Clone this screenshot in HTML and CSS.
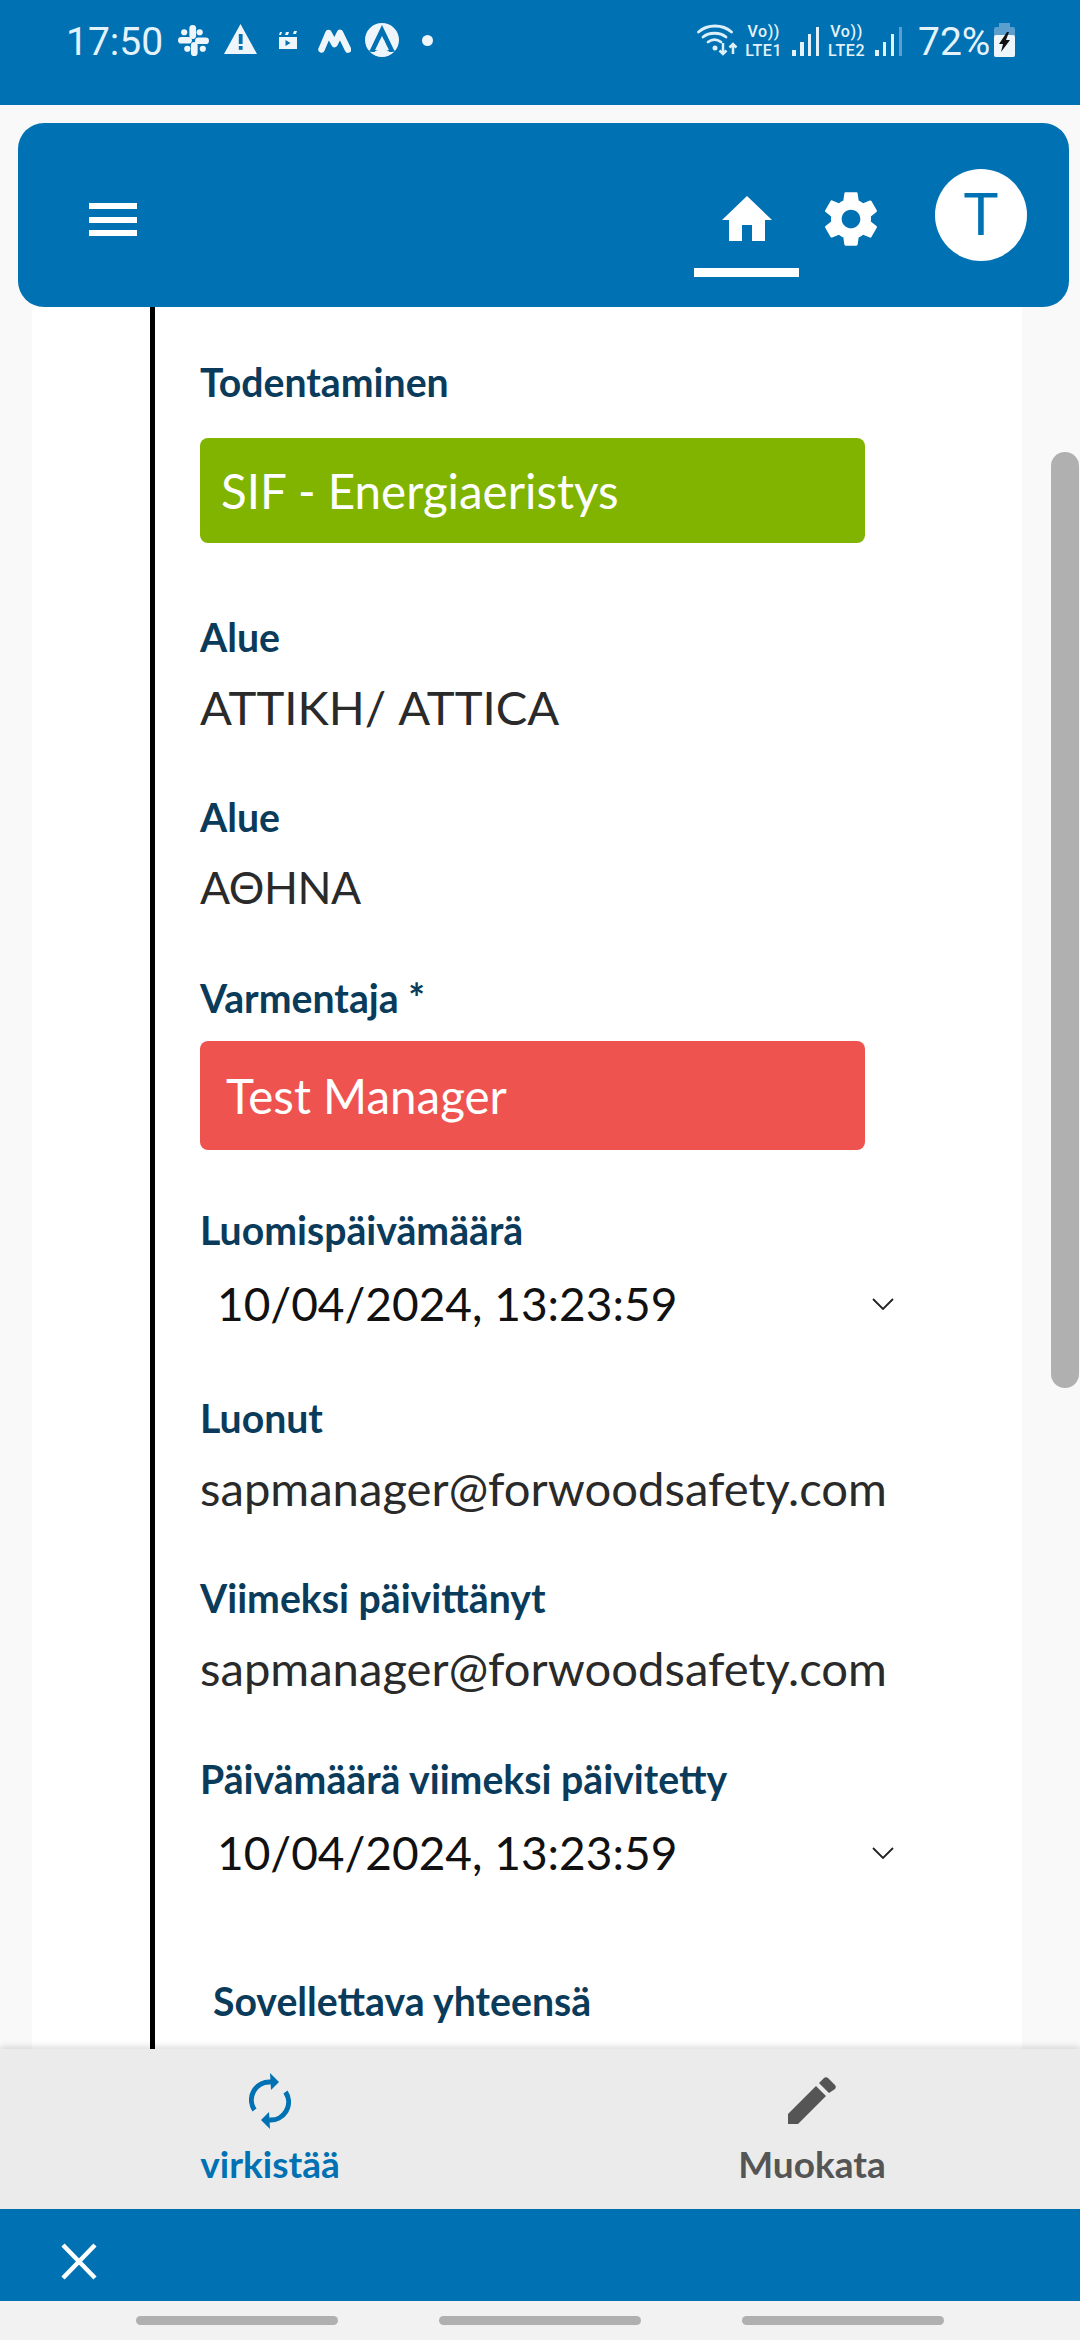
FILE: index.html
```html
<!DOCTYPE html>
<html lang="fi">
<head>
<meta charset="utf-8">
<title>Todentaminen</title>
<link rel="stylesheet" href="styles.css">
</head>
<body>
<div class="screen">
  <div class="status">
    <div class="status-left">
      <span class="clock">17:50</span>
      <svg class="ic-slack" viewBox="0 0 30 30"><g fill="#eef6fb"><rect x="11" y="0" width="6.500" height="13.500" rx="3.250"/><rect x="12.500" y="16.500" width="6.500" height="13.500" rx="3.250"/><rect x="0" y="11.500" width="13.500" height="6.500" rx="3.250"/><rect x="16.500" y="12" width="13.500" height="6.500" rx="3.250"/><circle cx="21" cy="7" r="3"/><circle cx="9" cy="23" r="3"/><circle cx="6" cy="7" r="3"/><circle cx="24" cy="23" r="3"/></g></svg>
      <svg class="ic-warn" viewBox="0 0 33 30"><path fill="#eef6fb" d="M16.500 0 33 30H0Z"/><rect x="14.800" y="10" width="3.800" height="10" fill="#0071b3"/><rect x="14.800" y="22" width="3.800" height="3.800" fill="#0071b3"/></svg>
      <svg class="ic-clap" viewBox="0 0 18 18"><path fill="#eef6fb" d="M0 6h18v12H0Z"/><path fill="#0071b3" d="M6.500 9l5 3-5 3Z"/><path fill="#eef6fb" d="M1 1h2L2 4H0ZM7 1h3L9 4H6ZM15 0h3l-1 3h-3Z"/></svg>
      <svg class="ic-m" viewBox="0 0 33 24"><path fill="none" stroke="#eef6fb" stroke-width="6.500" stroke-linecap="round" stroke-linejoin="round" d="M3.500 20.500 10.500 4l6 11 5.500-11 8 16.500"/></svg>
      <svg class="ic-a" viewBox="0 0 34 34"><circle cx="17" cy="17" r="17" fill="#eef6fb"/><path fill="#0071b3" d="M17 2 29 27h-5L17 13 10 27H5Z"/><path fill="#eef6fb" d="M15 17h4l2 5h-8Z"/><path fill="#0071b3" d="M5 27h24l1.500 1.500-4 .5H7.500l-4-.5Z"/><ellipse cx="17" cy="30" rx="8" ry="3.500" fill="#eef6fb"/></svg>
      <span class="dot"></span>
    </div>
    <div class="status-right">
      <svg class="ic-wifi" viewBox="0 0 41 32"><g fill="none" stroke="#dcf0fa" stroke-width="2.800" stroke-linecap="round"><path d="M1.500 8c9-8 24-8 33 0"/><path d="M6 13c6-5 17-5 23 0"/><path d="M11 18c4-3 9-3 13 0"/></g><circle cx="18" cy="24" r="2.500" fill="#dcf0fa"/><path fill="none" stroke="#dcf0fa" stroke-width="2.500" d="M26 19v11M22.500 26.500l3.500 3.500 3.500-3.500M36 30V20M32.500 23.500l3.500-3.500 3.500 3.500"/></svg>
      <span class="volte"><span>Vo))</span><span>LTE1</span></span>
      <span class="bars"><i class="b1"></i><i class="b2"></i><i class="b3"></i><i class="b4"></i></span>
      <span class="volte v2"><span>Vo))</span><span>LTE2</span></span>
      <span class="bars"><i class="b1"></i><i class="b2"></i><i class="b3"></i><i class="b4 dim"></i></span>
      <span class="pct">72%</span>
      <svg class="ic-batt" viewBox="0 0 21 34"><rect x="5" y="0" width="11" height="4" fill="#5c9fcf"/><rect x="0" y="4" width="21" height="30" rx="2" fill="#5c9fcf"/><rect x="0" y="12" width="21" height="22" rx="2" fill="#eef6fb"/><path fill="#111" d="M13 9 5 21h4l-2 8 9-12h-4l3-8Z"/></svg>
    </div>
  </div>

  <div class="page">
    <header class="appbar">
      <div class="menu"><i></i><i></i><i></i></div>
      <div class="appbar-right">
        <div class="tab active">
          <svg class="ic-home" viewBox="0 0 50 45"><path fill="#fff" d="M25 0 50 24h-7v21H30V29H20v16H7V24H0Z"/></svg>
        </div>
        <svg class="ic-gear" viewBox="0 0 24 24"><path fill="#fff" d="M19.430 12.980c.04-.32.07-.64.07-.98s-.03-.66-.07-.98l2.110-1.650c.19-.15.240-.42.120-.64l-2-3.460c-.12-.22-.39-.30-.61-.22l-2.490 1c-.52-.4-1.080-.73-1.690-.98l-.38-2.650C14.460 2.180 14.250 2 14 2h-4c-.25 0-.46.180-.49.420l-.38 2.650c-.61.25-1.170.59-1.690.98l-2.490-1c-.23-.09-.49 0-.61.220l-2 3.460c-.13.220-.07.490.12.640l2.110 1.650c-.04.320-.07.650-.07.980s.03.660.07.980l-2.110 1.650c-.19.150-.24.420-.12.640l2 3.460c.12.220.39.300.61.220l2.490-1c.52.400 1.080.730 1.690.980l.38 2.650c.03.240.24.420.49.420h4c.25 0 .46-.180.49-.420l.38-2.650c.61-.250 1.170-.590 1.690-.980l2.490 1c.23.090.49 0 .61-.220l2-3.460c.12-.220.07-.490-.12-.640l-2.110-1.650zM12 15.500c-1.930 0-3.500-1.570-3.500-3.500s1.570-3.500 3.500-3.500 3.500 1.570 3.500 3.500-1.570 3.500-3.500 3.500z"/></svg>
        <div class="avatar">T</div>
      </div>
    </header>

    <main class="content">
      <div class="card">
        <div class="rail">
          <div class="label first">Todentaminen</div>
          <div class="chip chip-green">SIF - Energiaeristys</div>
          <div class="label after-green">Alue</div>
          <div class="value">ΑΤΤΙΚΗ/ ATTICA</div>
          <div class="label gap58">Alue</div>
          <div class="value greek">ΑΘΗΝΑ</div>
          <div class="label gap59">Varmentaja *</div>
          <div class="chip chip-red">Test Manager</div>
          <div class="label gap59">Luomispäivämäärä</div>
          <div class="date"><span>10/04/2024, 13:23:59</span><svg class="chev" viewBox="0 0 22 12"><path fill="none" stroke="#222" stroke-width="1.800" d="M1 1l10 10L21 1"/></svg></div>
          <div class="label gap62">Luonut</div>
          <div class="value">sapmanager@forwoodsafety.com</div>
          <div class="label gap58">Viimeksi päivittänyt</div>
          <div class="value">sapmanager@forwoodsafety.com</div>
          <div class="label gap59">Päivämäärä viimeksi päivitetty</div>
          <div class="date"><span>10/04/2024, 13:23:59</span><svg class="chev" viewBox="0 0 22 12"><path fill="none" stroke="#222" stroke-width="1.800" d="M1 1l10 10L21 1"/></svg></div>
          <div class="label total">Sovellettava yhteensä</div>
        </div>
      </div>
      <div class="scrollbar"></div>
    </main>

    <div class="toolbar">
      <div class="action refresh">
        <svg class="ic-refresh" viewBox="0 0 42 56"><g fill="none" stroke="#0071b3" stroke-width="5"><path d="M5.500 37A18 18 0 0 1 22 9"/><path d="M36.500 19A18 18 0 0 1 20 47"/></g><g fill="#0071b3"><path d="M21 0l9 9-8 8Z"/><path d="M21 56l-9-9 8-8Z"/></g></svg>
        <span>virkistää</span>
      </div>
      <div class="action edit">
        <svg class="ic-pencil" viewBox="0 0 48 47"><path fill="#555" d="M0 47V37L28 9l10 10L10 47ZM31 6l5-5c1-1 3-1 4 0l7 7c1 1 1 3 0 4l-6 4Z"/></svg>
        <span>Muokata</span>
      </div>
    </div>
  </div>

  <div class="closebar">
    <svg class="ic-close" viewBox="0 0 36 37"><path fill="none" stroke="#fff" stroke-width="4.500" d="M2 2l32 33M34 2 2 35"/></svg>
  </div>
  <div class="navbar"><i></i><i></i><i></i></div>
</div>
</body>
</html>
```
FILE: styles.css
```css
* { box-sizing: border-box; }
html, body { margin: 0; padding: 0; }
body { width: 1080px; height: 2340px; overflow: hidden; background: #f9f9f9; font-family: Lato, "Noto Sans", sans-serif; }
.screen { width: 1080px; height: 2340px; display: flex; flex-direction: column; }

.status { flex: 0 0 105px; background: #0071b3; display: flex; justify-content: space-between; padding: 0 65px 0 66px; color: #e4f3fb; font-family: Roboto, sans-serif; }
.status-left { display: flex; align-items: flex-start; }
.status-right { display: flex; align-items: flex-start; }
.clock { font-size: 39px; line-height: 46px; margin-top: 19px; width: 112px; }
.ic-slack { width: 31px; height: 31px; margin-top: 25px; }
.ic-warn { width: 33px; height: 30px; margin: 24px 0 0 15px; }
.ic-clap { width: 18px; height: 18px; margin: 31px 0 0 22px; }
.ic-m { width: 33px; height: 24px; margin: 29px 0 0 21px; }
.ic-a { width: 34px; height: 34px; margin: 23px 0 0 14px; }
.dot { width: 11px; height: 11px; border-radius: 50%; background: #eef6fb; margin: 35px 0 0 23px; }
.ic-wifi { width: 41px; height: 32px; margin: 24px 0 0 0; }
.volte { display: flex; flex-direction: column; align-items: center; width: 39px; margin: 22px 0 0 6px; font-size: 16px; line-height: 19px; font-weight: 500; letter-spacing: .6px; white-space: nowrap; }
.volte.v2 { width: 41px; margin-left: 7px; }
.bars { display: flex; align-items: flex-end; gap: 4.300px; height: 29px; margin: 27px 0 0 9px; }
.v2 + .bars { margin-left: 8px; }
.bars i { display: block; width: 3.500px; background: #e4f3fb; }
.bars .b1 { height: 6px; }
.bars .b2 { height: 14px; }
.bars .b3 { height: 22px; }
.bars .b4 { height: 29px; }
.bars .dim { background: #5c9fcf; }
.pct { font-size: 39px; line-height: 46px; margin: 19px 0 0 16px; width: 69px; }
.ic-batt { width: 21px; height: 34px; margin: 23px 0 0 7px; }

.page { flex: 0 0 auto; height: 2104px; display: flex; flex-direction: column; background: #f9f9f9; }
.appbar { flex: 0 0 184px; margin: 18px 11px 0 18px; background: #0071b3; border-radius: 26px; display: flex; justify-content: space-between; align-items: flex-start; padding: 0 42px 0 71px; position: relative; z-index: 2; }
.menu { display: flex; flex-direction: column; gap: 7.500px; margin-top: 80px; }
.menu i { display: block; width: 48px; height: 6px; background: #fff; }
.appbar-right { display: flex; align-items: flex-start; }
.tab { width: 105px; height: 154px; border-bottom: 9px solid #fff; display: flex; justify-content: center; padding-top: 73px; }
.ic-home { width: 52px; height: 45px; }
.ic-gear { width: 64px; height: 64px; margin: 64px 0 0 20px; }
.avatar { width: 92px; height: 92px; border-radius: 50%; background: #fff; color: #0071b3; font-family: Roboto, sans-serif; font-size: 60px; line-height: 92px; text-align: center; margin: 46px 0 0 52px; }

.content { flex: 1 1 auto; min-height: 0; overflow: hidden; position: relative; }
.card { margin: 0 58px 0 32px; height: 100%; background: #fff; padding-left: 118px; }
.rail { height: 100%; border-left: 5px solid #000; padding: 54px 0 0 45px; }

.label { font-size: 39.200px; line-height: 42px; padding-bottom: 2px; font-weight: 700; color: #0b3b5a; }
.value { font-size: 47.200px; line-height: 58px; padding-bottom: 2px; color: #2a2a2a; margin-top: 18px; }
.greek { font-size: 44.500px; letter-spacing: -.5px; }
.chip { width: 665px; color: #fff; border-radius: 8px; font-size: 47.500px; display: flex; align-items: center; }
.chip-green { height: 105px; margin-top: 33px; background: #80b400; padding-left: 21px; }
.chip-red { height: 109px; margin-top: 20px; background: #ef5350; padding-left: 26px; }
.after-green { margin-top: 73px; }
.gap58 { margin-top: 58px; }
.gap59 { margin-top: 59px; }
.gap62 { margin-top: 62px; }
.date { display: flex; align-items: center; justify-content: space-between; width: 694px; height: 60px; margin-top: 22px; padding: 0 0 2px 17px; font-size: 46px; line-height: 58px; color: #111; }
.chev { width: 22px; height: 12px; }
.total { margin: 96px 0 0 13px; }
.scrollbar { position: absolute; top: 145px; right: 1px; width: 28px; height: 936px; border-radius: 14px; background: #b0b0b0; }

.toolbar { flex: 0 0 160px; display: grid; grid-template-columns: 1fr 1fr; background: #ebebeb; box-shadow: 0 -3px 6px rgba(0,0,0,.12); position: relative; z-index: 1; }
.action { display: flex; flex-direction: column; align-items: center; font-size: 37px; font-weight: 700; line-height: 44px; }
.refresh { color: #0071b3; }
.edit { color: #555; padding-left: 4px; }
.ic-refresh { width: 42px; height: 56px; margin-top: 24px; margin-bottom: 13px; }
.ic-pencil { width: 48px; height: 47px; margin-top: 28px; margin-bottom: 18px; }

.closebar { flex: 0 0 92px; background: #0071b3; display: flex; align-items: center; padding: 12px 0 0 61px; }
.ic-close { width: 36px; height: 37px; }
.navbar { flex: 1 1 auto; background: #f2f2f2; display: flex; justify-content: center; gap: 101px; padding-top: 15px; }
.navbar i { display: block; width: 202px; height: 9px; border-radius: 5px; background: #b0b0b0; }
```
